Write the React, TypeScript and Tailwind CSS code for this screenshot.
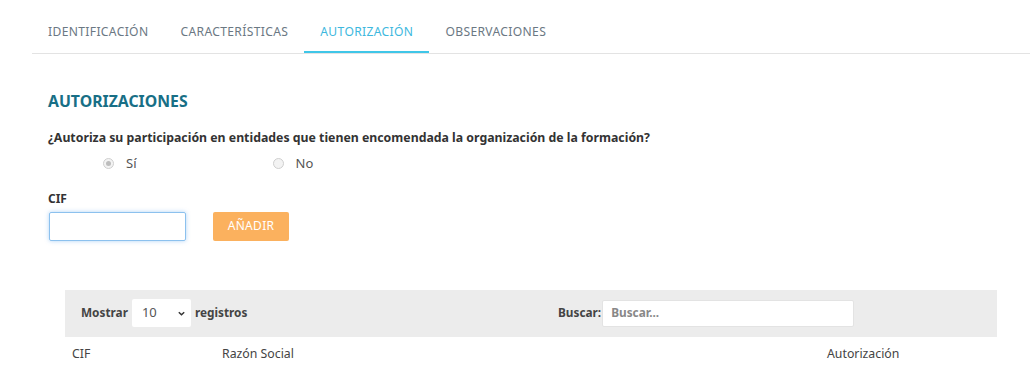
import React from "react";

const tabs = ["IDENTIFICACIÓN", "CARACTERÍSTICAS", "AUTORIZACIÓN", "OBSERVACIONES"];

const Radio = ({ checked, label }: { checked?: boolean; label: string }) => (
  <label className="flex items-center gap-[12px] text-[13px] text-[#555]">
    <span className="w-[11px] h-[11px] rounded-full border border-[#cfcfcf] bg-[#f3f3f3] flex items-center justify-center">
      {checked && <span className="w-[5px] h-[5px] rounded-full bg-[#bdbdbd]" />}
    </span>
    {label}
  </label>
);

export default function App() {
  return (
    <div
      className="w-[1030px] h-[366px] bg-white overflow-hidden"
      style={{ fontFamily: '"Noto Sans", "DejaVu Sans", sans-serif' }}
    >
      {/* tabs */}
      <div className="ml-[32px] flex border-b border-[#e3e3e3] h-[54px] items-stretch">
        {tabs.map((t) => {
          const active = t === "AUTORIZACIÓN";
          return (
            <div
              key={t}
              className={`px-[16px] pt-[24px] leading-[16px] text-[12.1px] tracking-[0.35px] border-b-2 ${
                active ? "text-[#3db8de] border-[#3fc6e8]" : "text-[#6b7883] border-transparent"
              }`}
            >
              {t}
            </div>
          );
        })}
      </div>

      <div className="pl-[48px]">
        <h2 className="mt-[38px] text-[15.8px] font-bold text-[#186f86] leading-[18px]">
          AUTORIZACIONES
        </h2>
        <p className="mt-[20px] text-[12.3px] font-bold text-[#333] leading-[16px]">
          ¿Autoriza su participación en entidades que tienen encomendada la organización de la formación?
        </p>
        <div className="mt-[8px] flex pl-[55px] gap-[136px]">
          <Radio checked label="Sí" />
          <Radio label="No" />
        </div>

        <div className="mt-[18px] text-[12px] font-bold text-[#333] leading-[14px]">CIF</div>
        <div className="mt-[6px] flex items-center gap-[27px]">
          <input
            className="ml-[1px] w-[137px] h-[29px] border border-[#8cc1ee] rounded-[2px] outline-none shadow-[0_0_4px_rgba(100,170,240,0.5)] px-2 text-[12px]"
            defaultValue=""
          />
          <button className="w-[76px] h-[29px] bg-[#fbb15e] rounded-[2px] text-white text-[12px] tracking-[0.3px]">
            AÑADIR
          </button>
        </div>
      </div>

      {/* table */}
      <div className="ml-[65px] w-[932px] mt-[49px]">
        <div className="bg-[#ececec] h-[47px] flex items-center pl-[16px] text-[11.8px] font-bold text-[#444]">
          <div className="flex items-center gap-[4px] w-[477px]">
            <span>Mostrar</span>
            <div className="w-[59px] h-[28px] bg-white rounded-[2px] flex items-center justify-between pl-[10px] pr-[5px]">
              <span className="text-[13px] font-normal text-[#555]">10</span>
              <svg width="9" height="9" viewBox="0 0 10 10">
                <path d="M2 3.5 L5 6.5 L8 3.5" fill="none" stroke="#333" strokeWidth="1.6" />
              </svg>
            </div>
            <span>registros</span>
          </div>
          <div className="flex items-center gap-[1px]">
            <span>Buscar:</span>
            <div className="w-[252px] h-[27px] bg-white border border-[#e3e3e3] rounded-[2px] flex items-center pl-[8px] text-[#888]">
              Buscar...
            </div>
          </div>
        </div>
        <div className="flex h-[36px] items-center text-[12.3px] text-[#444]">
          <div className="w-[157px] pl-[7px]">CIF</div>
          <div className="w-[605px]">Razón Social</div>
          <div>Autorización</div>
        </div>
      </div>
    </div>
  );
}
